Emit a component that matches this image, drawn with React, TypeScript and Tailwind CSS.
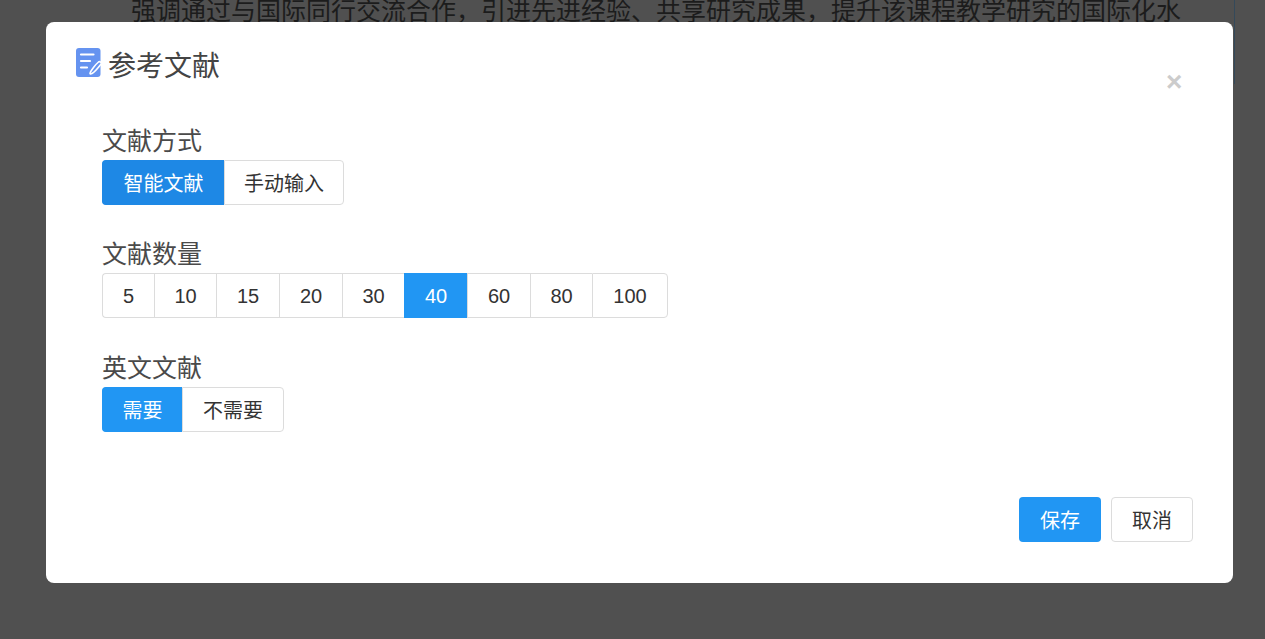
const FONT = "font-['Liberation_Sans','Noto_Sans_CJK_SC',sans-serif]";

type Segment = { label: string; width: string };

const WAYS: Segment[] = [
  { label: '智能文献', width: 'w-[122px]' },
  { label: '手动输入', width: 'w-[120px]' },
];

const COUNTS: Segment[] = [
  { label: '5', width: 'w-[52px]' },
  { label: '10', width: 'w-[62px]' },
  { label: '15', width: 'w-[63px]' },
  { label: '20', width: 'w-[63px]' },
  { label: '30', width: 'w-[62px]' },
  { label: '40', width: 'w-[63px]' },
  { label: '60', width: 'w-[63px]' },
  { label: '80', width: 'w-[62px]' },
  { label: '100', width: 'w-[76px]' },
];

const ENGLISH: Segment[] = [
  { label: '需要', width: 'w-[80px]' },
  { label: '不需要', width: 'w-[102px]' },
];

function Segments({ items, active, activeClass, textClass = '' }: { items: Segment[]; active: string; activeClass: string; textClass?: string }) {
  return (
    <div className="flex">
      {items.map((item, i) => {
        const on = item.label === active;
        const first = i === 0;
        const last = i === items.length - 1;
        return (
          <div
            key={item.label}
            className={`h-[45px] ${item.width} ${textClass} flex items-center justify-center text-[20px] border-y border-l ${
              first ? 'rounded-l-[4px]' : ''
            } ${last ? 'border-r rounded-r-[4px]' : ''} ${
              on ? `${activeClass} text-white` : 'bg-white text-[#333] border-[#dcdcdc]'
            }`}
          >
            {item.label}
          </div>
        );
      })}
    </div>
  );
}

function NoteIcon() {
  return (
    <svg width="27" height="30" viewBox="0 0 27 30" className="shrink-0 -mt-[10px] -mr-px">
      <rect x="0" y="1" width="24.5" height="29" rx="3" fill="#6593f0" />
      <path d="M5 7.5h12.5M5 14h9M5 20.5h6" stroke="#fff" strokeWidth="2.2" strokeLinecap="round" fill="none" />
      <path d="M14 26.5c0-2 6-9.5 8.5-11.5 1.4-1 3.4.6 2.4 2.2-2 2.6-6.4 8-8.9 9.3-1 .5-2 .6-2 0z" fill="#6593f0" stroke="#fff" strokeWidth="1.6" />
    </svg>
  );
}

export default function App() {
  return (
    <div className={`relative h-[639px] w-full overflow-hidden bg-[#505050] ${FONT}`}>
      <p className="pl-[131px] text-[25px] leading-[22px] text-[#1c1c1c] whitespace-nowrap">
        强调通过与国际同行交流合作，引进先进经验、共享研究成果，提升该课程教学研究的国际化水
      </p>
      <div className="absolute left-[1234px] top-0 h-[84px] w-px bg-[#34495a]" />

      <div className="absolute left-[46px] top-[22px] w-[1187px] h-[561px] bg-white rounded-[8px] flex flex-col">
        <div className="relative flex items-center gap-[6px] pl-[30px] pt-[22px] h-[68px]">
          <NoteIcon />
          <span className="text-[28px] leading-[36px] text-[#444]">参考文献</span>
          <span className="absolute left-[1120px] top-[44px] text-[28px] leading-[32px] font-bold text-[#cccccc]">×</span>
        </div>

        <div className="flex flex-col items-start pl-[56px] pt-[33px]">
          <div>
            <div className="text-[25px] leading-[36px] text-[#4a4a4a] mb-px">文献方式</div>
            <Segments items={WAYS} active="智能文献" activeClass="bg-[#1e88e5] border-[#1e88e5]" textClass="pt-[2px]" />
          </div>
          <div className="mt-[31px]">
            <div className="text-[25px] leading-[36px] text-[#4a4a4a] mb-px">文献数量</div>
            <Segments items={COUNTS} active="40" activeClass="bg-[#2196f3] border-[#2196f3]" />
          </div>
          <div className="mt-[32px]">
            <div className="text-[25px] leading-[36px] text-[#4a4a4a] mb-px">英文文献</div>
            <Segments items={ENGLISH} active="需要" activeClass="bg-[#2196f3] border-[#2196f3]" textClass="pt-[2px]" />
          </div>
        </div>

        <div className="flex justify-end gap-[10px] pr-[40px] mt-[65px]">
          <button className="h-[45px] w-[82px] pt-[2px] rounded-[4px] bg-[#2196f3] text-white text-[20px]">保存</button>
          <button className="h-[45px] w-[82px] pt-[2px] rounded-[4px] bg-white border border-[#dcdcdc] text-[#333] text-[20px]">取消</button>
        </div>
      </div>
    </div>
  );
}
